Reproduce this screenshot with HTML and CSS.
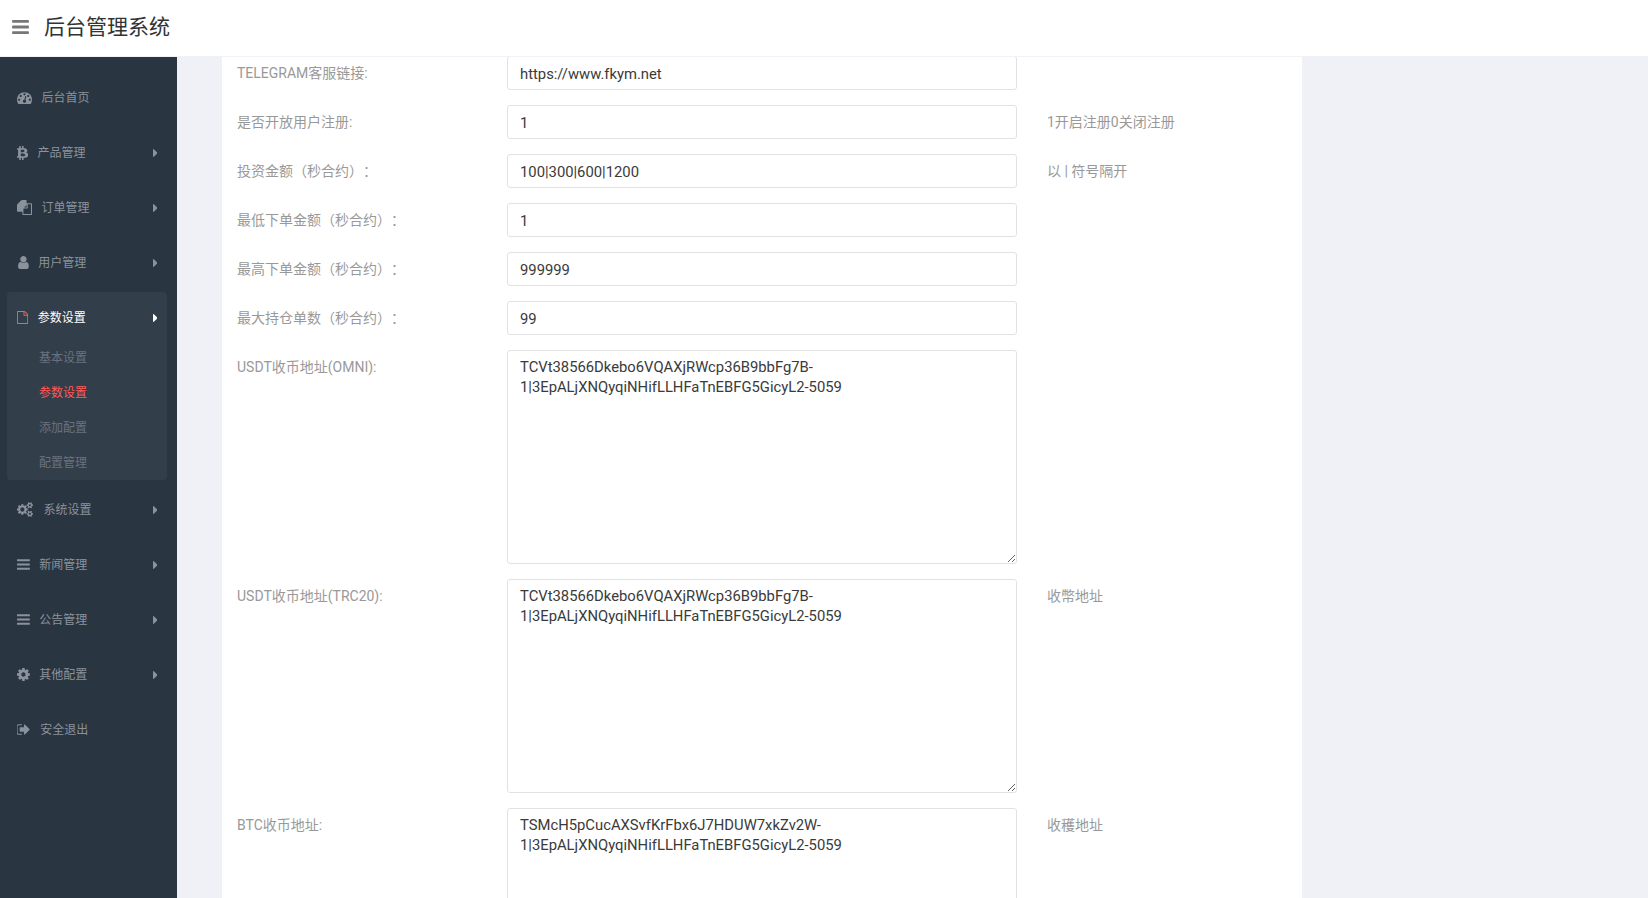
FILE: index.html
```html
<!DOCTYPE html>
<html lang="zh">
<head>
  <meta charset="UTF-8">
  <title>后台管理系统</title>
  <link rel="stylesheet" href="styles.css">
</head>
<body>
  <header class="topbar">
    <svg class="topbar-toggle" viewBox="128 256 1536 1280"><path d="M1664 1344v128q0 26-19 45t-45 19h-1408q-26 0-45-19t-19-45v-128q0-26 19-45t45-19h1408q26 0 45 19t19 45zm0-512v128q0 26-19 45t-45 19h-1408q-26 0-45-19t-19-45v-128q0-26 19-45t45-19h1408q26 0 45 19t19 45zm0-512v128q0 26-19 45t-45 19h-1408q-26 0-45-19t-19-45v-128q0-26 19-45t45-19h1408q26 0 45 19t19 45z"/></svg>
    <h1>后台管理系统</h1>
  </header>

  <div class="layout">
    <!-- 侧边栏 -->
    <aside class="sidebar">
      <svg class="icon-defs" width="0" height="0">
        <defs>
          <path id="p-caret" d="M1152 896q0 26-19 45l-448 448q-19 19-45 19t-45-19-19-45v-896q0-26 19-45t45-19 45 19l448 448q19 19 19 45z"/>
          <path id="p-bars" d="M1664 1344v128q0 26-19 45t-45 19h-1408q-26 0-45-19t-19-45v-128q0-26 19-45t45-19h1408q26 0 45 19t19 45zm0-512v128q0 26-19 45t-45 19h-1408q-26 0-45-19t-19-45v-128q0-26 19-45t45-19h1408q26 0 45 19t19 45zm0-512v128q0 26-19 45t-45 19h-1408q-26 0-45-19t-19-45v-128q0-26 19-45t45-19h1408q26 0 45 19t19 45z"/>
        </defs>
      </svg>
      <ul class="nav">
        <li class="nav-item">
          <svg class="nav-icon" viewBox="0 0 1792 1792"><path d="M384 1152q0-53-37.5-90.5t-90.5-37.5-90.5 37.5-37.5 90.5 37.5 90.5 90.5 37.5 90.5-37.5 37.5-90.5zm192-448q0-53-37.5-90.5t-90.5-37.5-90.5 37.5-37.5 90.5 37.5 90.5 90.5 37.5 90.5-37.5 37.5-90.5zm428 481l101-382q6-26-7.5-48.5t-38.5-29.5-48 6.5-30 39.5l-101 382q-60 5-107 43.5t-63 98.5q-20 77 20 146t117 89 146-20 89-117q16-60-6-117t-72-91zm660-33q0-53-37.5-90.5t-90.5-37.5-90.5 37.5-37.5 90.5 37.5 90.5 90.5 37.5 90.5-37.5 37.5-90.5zm-640-640q0-53-37.5-90.5t-90.5-37.5-90.5 37.5-37.5 90.5 37.5 90.5 90.5 37.5 90.5-37.5 37.5-90.5zm448 192q0-53-37.5-90.5t-90.5-37.5-90.5 37.5-37.5 90.5 37.5 90.5 90.5 37.5 90.5-37.5 37.5-90.5zm320 448q0 261-141 483-19 29-54 29h-1402q-35 0-54-29-141-221-141-483 0-182 71-348t191-286 286-191 348-71 348 71 286 191 191 286 71 348z"/></svg>
          <span>后台首页</span>
        </li>
        <li class="nav-item">
          <svg class="nav-icon nav-icon-btc" viewBox="150 0 1080 1792" preserveAspectRatio="none"><path d="M1167 640q18 182-131 258 117 28 175 103t45 214q-7 71-32.5 125t-64.5 89-97 58.5-121.5 34.5-145.5 15v255h-154v-251q-80 0-122-1v252h-154v-255q-18 0-54-.5t-55-.5h-200l31-183h111q50 0 58-51v-402h16q-6-1-16-1v-287q-13-68-89-68h-111v-164l212 1q64 0 97-1v-252h154v247q82-2 122-2v-245h154v252q79 7 140 22.5t113 45 82.5 78 36.5 114.5zm-215 545q0-36-15-64t-37-46-57.5-30.5-65.5-18.5-74-9-69-3-64.5 1-47.5 1v338q8 0 37 .5t48 .5 53-1.5 58.5-4 57-8.5 55.5-14 47.5-21 39.5-30 24.5-40 9.5-51zm-71-476q0-33-12.5-58.5t-30.5-42-48-28-55-16.5-61.5-8-58-2.5-54 1-39.5.5v307q5 0 34.5.5t46.5 0 50-2 55-5.5 51.5-11 48.5-18.5 37-27 27-38.5 9-51z"/></svg>
          <span>产品管理</span>
          <svg class="nav-caret" viewBox="576 384 576 1024"><use href="#p-caret"/></svg>
        </li>
        <li class="nav-item">
          <svg class="nav-icon" viewBox="0 0 1792 1792"><path d="M1696 384q40 0 68 28t28 68v1216q0 40-28 68t-68 28h-960q-40 0-68-28t-28-68v-288h-544q-40 0-68-28t-28-68v-672q0-40 20-88t48-76l408-408q28-28 76-48t88-20h416q40 0 68 28t28 68v328q68-40 128-40h416zm-544 213l-299 299h299v-299zM1664 1664v-1152h-384v416q0 40-28 68t-68 28h-416v640h896z"/></svg>
          <span>订单管理</span>
          <svg class="nav-caret" viewBox="576 384 576 1024"><use href="#p-caret"/></svg>
        </li>
        <li class="nav-item">
          <svg class="nav-icon" viewBox="128 0 1408 1792"><path d="M1536 1399q0 109-62.5 187t-150.5 78h-854q-88 0-150.5-78t-62.5-187q0-85 8.5-160.5t31.5-152 58.5-131 94-89 134.5-34.5q131 128 313 128t313-128q76 0 134.5 34.5t94 89 58.5 131 31.5 152 8.5 160.5zm-256-887q0 159-112.5 271.5t-271.5 112.5-271.5-112.5-112.5-271.5 112.5-271.5 271.5-112.5 271.5 112.5 112.5 271.5z"/></svg>
          <span>用户管理</span>
          <svg class="nav-caret" viewBox="576 384 576 1024"><use href="#p-caret"/></svg>
        </li>
        <li class="nav-group">
          <div class="nav-item nav-item-open">
            <svg class="nav-icon nav-icon-file" viewBox="128 0 1536 1792"><path d="M1596 380q28 28 48 76t20 88v1152q0 40-28 68t-68 28h-1344q-40 0-68-28t-28-68v-1600q0-40 28-68t68-28h896q40 0 88 20t76 48zm-444-244v376h376q-10-29-22-41l-313-313q-12-12-41-22zm384 1528v-1024h-416q-40 0-68-28t-28-68v-416h-768v1536h1280z"/></svg>
            <span>参数设置</span>
            <svg class="nav-caret" viewBox="576 384 576 1024"><use href="#p-caret"/></svg>
          </div>
          <ul class="subnav">
            <li>基本设置</li>
            <li class="active">参数设置</li>
            <li>添加配置</li>
            <li>配置管理</li>
          </ul>
        </li>
        <li class="nav-item">
          <svg class="nav-icon nav-icon-wide" viewBox="0 0 1920 1792"><path d="M896 896q0-106-75-181t-181-75-181 75-75 181 75 181 181 75 181-75 75-181zm768 512q0-52-38-90t-90-38-90 38-38 90q0 53 37.5 90.5t90.5 37.5 90.5-37.5 37.5-90.5zm0-1024q0-52-38-90t-90-38-90 38-38 90q0 53 37.5 90.5t90.5 37.5 90.5-37.5 37.5-90.5zm-384 421v185q0 10-7 19.5t-16 10.5l-155 24q-11 35-32 76 34 48 90 115 7 11 7 20 0 12-7 19-23 30-82.5 89.5t-78.5 59.5q-11 0-21-7l-115-90q-37 19-77 31-11 108-23 155-7 24-30 24h-186q-11 0-20-7.5t-10-17.5l-23-153q-34-10-75-31l-118 89q-7 7-20 7-11 0-21-8-144-133-144-160 0-9 7-19 10-14 41-53t47-61q-23-44-35-82l-152-24q-10-1-17-9.5t-7-19.5v-185q0-10 7-19.5t16-10.5l155-24q11-35 32-76-34-48-90-115-7-11-7-20 0-12 7-20 22-30 82-89t79-59q11 0 21 7l115 90q34-18 77-32 11-108 23-154 7-24 30-24h186q11 0 20 7.5t10 17.5l23 153q34 10 75 31l118-89q8-7 20-7 11 0 21 8 144 133 144 160 0 8-7 19-12 16-42 54t-45 60q23 48 34 82l152 23q10 2 17 10.5t7 19.5zm640 533v140q0 16-149 31-12 27-30 52 51 113 51 138 0 4-4 7-122 71-124 71-8 0-46-47t-52-68q-20 2-30 2t-30-2q-14 21-52 68t-46 47q-2 0-124-71-4-3-4-7 0-25 51-138-18-25-30-52-149-15-149-31v-140q0-16 149-31 13-29 30-52-51-113-51-138 0-4 4-7 4-2 35-20t59-34 30-16q8 0 46 46.5t52 67.5q20-2 30-2t30 2q51-71 92-112l6-2q4 0 124 70 4 3 4 7 0 25-51 138 17 23 30 52 149 15 149 31zm0-1024v140q0 16-149 31-12 27-30 52 51 113 51 138 0 4-4 7-122 71-124 71-8 0-46-47t-52-68q-20 2-30 2t-30-2q-14 21-52 68t-46 47q-2 0-124-71-4-3-4-7 0-25 51-138-18-25-30-52-149-15-149-31v-140q0-16 149-31 13-29 30-52-51-113-51-138 0-4 4-7 4-2 35-20t59-34 30-16q8 0 46 46.5t52 67.5q20-2 30-2t30 2q51-71 92-112l6-2q4 0 124 70 4 3 4 7 0 25-51 138 17 23 30 52 149 15 149 31z"/></svg>
          <span>系统设置</span>
          <svg class="nav-caret" viewBox="576 384 576 1024"><use href="#p-caret"/></svg>
        </li>
        <li class="nav-item">
          <svg class="nav-icon" viewBox="128 0 1536 1792"><use href="#p-bars"/></svg>
          <span>新闻管理</span>
          <svg class="nav-caret" viewBox="576 384 576 1024"><use href="#p-caret"/></svg>
        </li>
        <li class="nav-item">
          <svg class="nav-icon" viewBox="128 0 1536 1792"><use href="#p-bars"/></svg>
          <span>公告管理</span>
          <svg class="nav-caret" viewBox="576 384 576 1024"><use href="#p-caret"/></svg>
        </li>
        <li class="nav-item">
          <svg class="nav-icon" viewBox="128 0 1536 1792"><path d="M1152 896q0-106-75-181t-181-75-181 75-75 181 75 181 181 75 181-75 75-181zm512-109v222q0 12-8 23t-20 13l-185 28q-19 54-39 91 35 50 107 138 10 12 10 25t-9 23q-27 37-99 108t-94 71q-12 0-26-9l-138-108q-44 23-91 38-16 136-29 186-7 28-36 28h-222q-14 0-24.5-8.5t-11.5-21.5l-28-184q-49-16-90-37l-141 107q-10 9-25 9-14 0-25-11-126-114-165-168-7-10-7-23 0-12 8-23 15-21 51-66.5t54-70.5q-27-50-41-99l-183-27q-13-2-21-12.5t-8-23.5v-222q0-12 8-23t19-13l186-28q14-46 39-92-40-57-107-138-10-12-10-24 0-10 9-23 26-36 98.5-107.5t94.5-71.5q13 0 26 10l138 107q44-23 91-38 16-136 29-186 7-28 36-28h222q14 0 24.5 8.5t11.5 21.5l28 184q49 16 90 37l142-107q9-9 24-9 13 0 25 10 129 119 165 170 7 8 7 22 0 12-8 23-15 21-51 66.5t-54 70.5q26 50 41 98l183 28q13 2 21 12.5t8 23.5z"/></svg>
          <span>其他配置</span>
          <svg class="nav-caret" viewBox="576 384 576 1024"><use href="#p-caret"/></svg>
        </li>
        <li class="nav-item">
          <svg class="nav-icon nav-icon-wide" viewBox="128 0 1536 1792"><path d="M704 1440q0 4 1 20t.5 26.5-3 23.5-10 19.5-20.5 6.5h-320q-119 0-203.5-84.5t-84.5-203.5v-704q0-119 84.5-203.5t203.5-84.5h320q13 0 22.5 9.5t9.5 22.5q0 4 1 20t.5 26.5-3 23.5-10 19.5-20.5 6.5h-320q-66 0-113 47t-47 113v704q0 66 47 113t113 47h312l11.5 1 11.5 3 8 5.5 7 9 2 13.5zm928-544q0 26-19 45l-544 544q-19 19-45 19t-45-19-19-45v-288h-448q-26 0-45-19t-19-45v-384q0-26 19-45t45-19h448v-288q0-26 19-45t45-19 45 19l544 544q19 19 19 45z"/></svg>
          <span>安全退出</span>
        </li>
      </ul>
    </aside>

    <!-- 参数表单 -->
    <main class="content">
      <form class="card">
        <div class="form-row">
          <label>TELEGRAM客服链接:</label>
          <input class="field" type="text" value="https://www.fkym.net">
          <span class="hint"></span>
        </div>
        <div class="form-row">
          <label>是否开放用户注册:</label>
          <input class="field" type="text" value="1">
          <span class="hint">1开启注册0关闭注册</span>
        </div>
        <div class="form-row">
          <label>投资金额（秒合约）：</label>
          <input class="field" type="text" value="100|300|600|1200">
          <span class="hint">以 | 符号隔开</span>
        </div>
        <div class="form-row">
          <label>最低下单金额（秒合约）：</label>
          <input class="field" type="text" value="1">
          <span class="hint"></span>
        </div>
        <div class="form-row">
          <label>最高下单金额（秒合约）：</label>
          <input class="field" type="text" value="999999">
          <span class="hint"></span>
        </div>
        <div class="form-row">
          <label>最大持仓单数（秒合约）：</label>
          <input class="field" type="text" value="99">
          <span class="hint"></span>
        </div>
        <div class="form-row">
          <label>USDT收币地址(OMNI):</label>
          <textarea class="field">TCVt38566Dkebo6VQAXjRWcp36B9bbFg7B-1|3EpALjXNQyqiNHifLLHFaTnEBFG5GicyL2-5059</textarea>
          <span class="hint"></span>
        </div>
        <div class="form-row">
          <label>USDT收币地址(TRC20):</label>
          <textarea class="field">TCVt38566Dkebo6VQAXjRWcp36B9bbFg7B-1|3EpALjXNQyqiNHifLLHFaTnEBFG5GicyL2-5059</textarea>
          <span class="hint">收幣地址</span>
        </div>
        <div class="form-row">
          <label>BTC收币地址:</label>
          <textarea class="field">TSMcH5pCucAXSvfKrFbx6J7HDUW7xkZv2W-1|3EpALjXNQyqiNHifLLHFaTnEBFG5GicyL2-5059</textarea>
          <span class="hint">收穫地址</span>
        </div>
      </form>
    </main>
  </div>
</body>
</html>
```

FILE: styles.css
```css
* {
  margin: 0;
  padding: 0;
  box-sizing: border-box;
}

html, body {
  height: 100%;
  overflow: hidden;
}

body {
  display: flex;
  flex-direction: column;
  font-family: Roboto, "Noto Sans CJK SC", sans-serif;
  font-size: 14px;
  line-height: 20px;
  text-spacing-trim: space-all;
  background-color: #eff1f7;
  color: #333;
}

ul {
  list-style: none;
}

/* top bar */
.topbar {
  position: relative;
  z-index: 2;
  flex: none;
  display: flex;
  align-items: center;
  height: 57px;
  padding: 0 0 2px 12px;
  background-color: #fff;
  border-bottom: 1px solid #f0f2f7;
}

.topbar-toggle {
  width: 17px;
  height: 14px;
  margin-right: 15px;
  fill: #777;
}

.topbar h1 {
  font-size: 21px;
  font-weight: 400;
  color: #333;
}

.layout {
  flex: 1;
  display: flex;
  min-height: 0;
}

/* sidebar */
.sidebar {
  flex: none;
  width: 177px;
  padding-top: 13px;
  background-color: #2a3542;
  color: #8a929c;
  font-size: 12px;
}

.icon-defs {
  display: block;
}

.nav-item {
  display: flex;
  align-items: center;
  height: 55px;
  padding: 0 20px 0 17px;
}

.nav-icon {
  flex: none;
  height: 15px;
  margin-right: 9.5px;
  fill: currentColor;
}

.nav-icon-btc {
  width: 11px;
}

.nav-icon-wide {
  margin-right: 10.5px;
}

.nav-caret {
  flex: none;
  width: 4.5px;
  height: 8px;
  margin-left: auto;
  fill: currentColor;
}

.nav-group {
  margin: 2px 10px 2px 7px;
  background-color: #333e4b;
  border-radius: 4px;
}

.nav-item-open {
  height: 48px;
  padding: 3px 10px 0 10px;
  color: #fff;
}

.nav-icon-file {
  height: 13px;
  fill: #ff5a57;
}

.subnav li {
  height: 35px;
  padding-top: 1px;
  line-height: 35px;
  padding-left: 32px;
  color: #697280;
}

.subnav li.active {
  color: #ff5a57;
}

/* form */
.content {
  flex: 1;
  min-width: 0;
  padding-left: 45px;
  overflow: hidden;
}

.card {
  width: 1080px;
  margin-top: -1px;
  padding: 0 15px;
  background-color: #fff;
}

.form-row {
  display: grid;
  grid-template-columns: 240px 510px 1fr;
  column-gap: 30px;
  margin-bottom: 15px;
}

.form-row label,
.hint {
  padding-top: 7px;
  color: #999;
}

.field {
  display: block;
  width: 100%;
  padding: 6px 12px;
  font: inherit;
  font-size: 14.8px;
  color: #3a3a3a;
  background-color: #fff;
  border: 1px solid #e2e2e4;
  border-radius: 3px;
  outline: none;
}

input.field {
  height: 34px;
  padding: 7px 12px 5px;
}

textarea.field {
  height: 214px;
}
```
